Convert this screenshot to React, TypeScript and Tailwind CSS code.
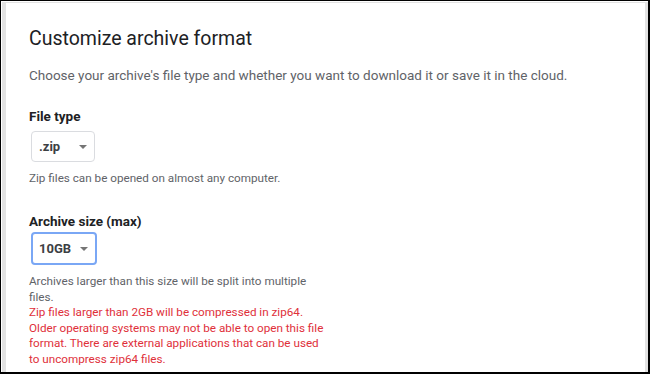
export default function App() {
  return (
    <div
      className="w-[650px] h-[374px] bg-black pt-px pl-px pr-[2px] pb-[2px] overflow-hidden"
      style={{ fontFamily: "Roboto, 'Liberation Sans', sans-serif" }}
    >
      <div className="w-full h-full bg-white pl-px pt-px flex">
        <div className="flex-1 flex border-l-[4px] border-r-[3px] border-t border-[#e2e2e2] bg-white">
          <div className="flex-1 pl-[23px] pt-[24px]">
            <h1 className="text-[19.5px] leading-[24px] text-[#202124]">Customize archive format</h1>
            <p className="mt-[14px] text-[13.5px] leading-[20px] text-[#5f6368]">
              Choose your archive's file type and whether you want to download it or save it in the cloud.
            </p>
            <div className="mt-[21px] text-[13.5px] leading-[20px] font-bold text-[#202124]">File type</div>
            <div className="mt-[5px] ml-[2px] w-[64px] h-[31px] border border-[#dadce0] rounded-[4px] flex items-center justify-between pl-[7px] pr-[7px]">
              <span className="text-[13px] font-bold text-[#3c4043]">.zip</span>
              <svg width="8" height="4" viewBox="0 0 8 4"><path d="M0 0h8L4 4z" fill="#757575" /></svg>
            </div>
            <p className="mt-[8px] text-[11.7px] leading-[16px] text-[#5f6368]">Zip files can be opened on almost any computer.</p>
            <div className="mt-[25px] text-[13.5px] leading-[20px] font-bold text-[#202124]">Archive size (max)</div>
            <div className="mt-[1px] ml-[2px] w-[66px] h-[33px] border-2 border-[#7aa7f5] rounded-[4px] flex items-center justify-between pl-[6px] pr-[7px]">
              <span className="text-[13px] font-bold text-[#3c4043]">10GB</span>
              <svg width="8" height="4" viewBox="0 0 8 4"><path d="M0 0h8L4 4z" fill="#757575" /></svg>
            </div>
            <div className="mt-[9px] w-[300px] text-[11.7px] leading-[15.5px]">
              <p className="text-[#5f6368]">Archives larger than this size will be split into multiple files.</p>
              <p className="text-[#e0303a]">
                Zip files larger than 2GB will be compressed in zip64. Older operating systems may not be able to open this file format. There are external applications that can be used to uncompress zip64 files.
              </p>
            </div>
          </div>
        </div>
      </div>
    </div>
  );
}
